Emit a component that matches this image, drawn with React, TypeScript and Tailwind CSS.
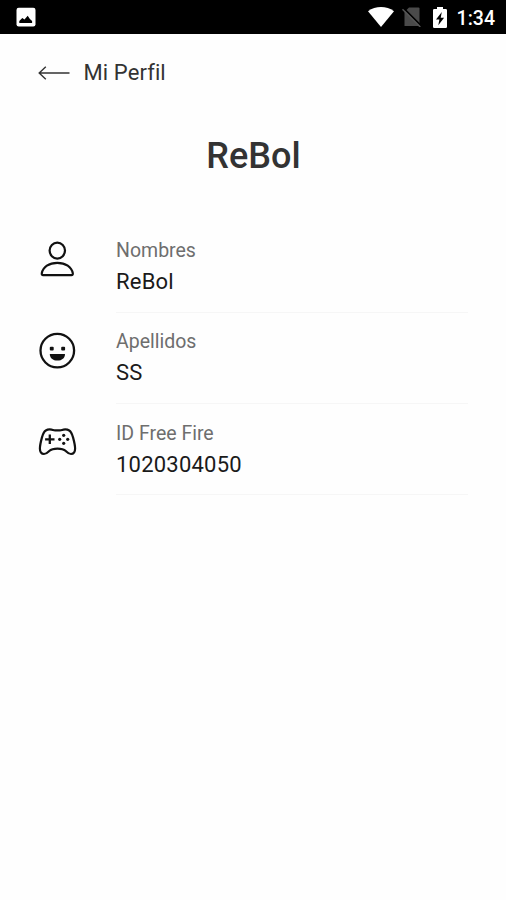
import type { ReactNode } from 'react'

const fields: { label: string; value: string; icon: ReactNode }[] = [
  { label: 'Nombres', value: 'ReBol', icon: <UserIcon /> },
  { label: 'Apellidos', value: 'SS', icon: <SmileIcon /> },
  { label: 'ID Free Fire', value: '1020304050', icon: <GamepadIcon /> },
]

function UserIcon() {
  return (
    <svg width="40" height="40" viewBox="0 0 40 40" fill="none" stroke="#111" strokeWidth="2.2" strokeLinejoin="round">
      <ellipse cx="20.3" cy="10.6" rx="7.7" ry="8" />
      <path d="M6.2 35.2c-1.2 0-1.6-.7-1.4-1.9C6 27 12 22.8 20.3 22.8S34.6 27 35.8 33.3c.2 1.2-.2 1.9-1.4 1.9z" />
    </svg>
  )
}

function SmileIcon() {
  return (
    <svg width="40" height="40" viewBox="0 0 40 40" fill="none">
      <circle cx="20.3" cy="19.6" r="16.8" stroke="#111" strokeWidth="2.3" />
      <rect x="12.8" y="15.8" width="3.9" height="3.8" rx="1" fill="#111" />
      <rect x="24.2" y="15.8" width="3.9" height="3.8" rx="1" fill="#111" />
      <path d="M12.8 23h15.2c0 4.1-3.1 6.6-7.6 6.6s-7.6-2.5-7.6-6.6z" fill="#111" />
    </svg>
  )
}

function GamepadIcon() {
  return (
    <svg width="40" height="40" viewBox="0 0 40 40" fill="none">
      <path
        d="M8.800 7.500c1.600-1 3.600-1.200 5.700-.9 1.400.2 2 .8 3.600.8h4.800c1.600 0 2.200-.6 3.600-.8 2.100-.3 4.100-.1 5.700.9 2.100 1.300 3 3.900 3.900 7.100 1 3.700 2 7.500 2 10.900 0 3.700-1.600 5.500-4.100 5.500-2.300 0-3.600-1.500-5.200-3-1.900-1.700-4.300-2.400-8.300-2.400s-6.400.7-8.300 2.400c-1.600 1.500-2.900 3-5.200 3-2.500 0-4.100-1.800-4.100-5.500 0-3.400 1-7.200 2-10.900.9-3.200 1.800-5.800 3.900-7.100z"
        stroke="#111"
        strokeWidth="2.2"
        strokeLinejoin="round"
      />
      <path d="M12.800 11.600v9.400M8.100 16.300h9.400" stroke="#111" strokeWidth="2.3" />
      <g fill="#111">
        <circle cx="26.700" cy="12.300" r="1.6" />
        <circle cx="26.700" cy="20.300" r="1.6" />
        <circle cx="22.700" cy="16.300" r="1.6" />
        <circle cx="30.700" cy="16.300" r="1.6" />
      </g>
    </svg>
  )
}

function StatusBar() {
  return (
    <div className="flex h-[34px] items-center justify-between bg-black pr-[11px] pl-4">
      <svg width="20" height="20" viewBox="0 0 20 20">
        <rect x="0.5" y="0.8" width="19" height="18.6" rx="2.2" fill="#fff" />
        <path d="M3.3 16v-2l3-3 2.2 1.600 3.200-3.800 2.200 3.200 2.200 2v2z" fill="#000" />
      </svg>
      <div className="flex items-center">
        <svg width="26" height="20" viewBox="0 0 26 20">
          <path d="M0 4.2C7.5-1.4 18.5-1.4 26 4.2L13 20z" fill="#fff" />
        </svg>
        <svg className="ml-2" width="20" height="20" viewBox="0 0 20 20">
          <path d="M7 .5h9.5q1 0 1 1V19H2.5V5z" fill="#4a4a4a" />
          <path d="M1.5 1.2L19 18.7" stroke="#000" strokeWidth="1.8" />
          <path d="M0.5 2.2L18.3 20" stroke="#555" strokeWidth="1.5" />
        </svg>
        <svg className="ml-[11px]" width="14" height="21" viewBox="0 0 14 21">
          <path d="M4 0h6v2h2.7q1.3 0 1.3 1.3V19.7q0 1.3-1.3 1.3H1.3Q0 21 0 19.7V3.3Q0 2 1.3 2H4z" fill="#fff" />
          <path d="M8.8 5L3 12.4h3.400L5.3 18.2 11.1 10.8H7.7z" fill="#000" />
        </svg>
        <span className="ml-[10px] pt-[3px] text-[19.5px] leading-[31px] font-medium text-white">1:34</span>
      </div>
    </div>
  )
}

export default function App() {
  return (
    <main className="h-[900px] w-[506px] overflow-hidden bg-[#fefefe] font-['Roboto',sans-serif]">
      <StatusBar />
      <header className="flex h-[78px] items-center pl-[38px]">
        <button type="button" className="flex items-center text-[#333]">
          <svg width="32" height="14" viewBox="0 0 32 14" fill="none" stroke="currentColor" strokeWidth="1.4">
            <path d="M31.5 7H1.2M7.8.7L1.2 7l6.6 6.3" />
          </svg>
          <span className="ml-[13.5px] text-[22px] leading-[26px] tracking-[0.1px]">Mi Perfil</span>
        </button>
      </header>
      <h1 className="mt-[22px] pl-[1px] text-center text-[36px] leading-[44px] font-medium text-[#333]">ReBol</h1>
      <section className="mt-[43.6px]">
        {fields.map(({ label, value, icon }) => (
          <div key={label} className="flex h-[91.3px] pl-[37px]">
            <div className="mt-[18.4px]">{icon}</div>
            <div className="ml-[39px] w-[352px] border-b border-[#f6f6f6] pt-[17.4px]">
              <p className="text-[19.5px] leading-[24px] text-[#6e6e6e]">{label}</p>
              <p className="mt-1 text-[22px] leading-[30px] tracking-[0.22px] text-[#1a1a1a]">{value}</p>
            </div>
          </div>
        ))}
      </section>
    </main>
  )
}
